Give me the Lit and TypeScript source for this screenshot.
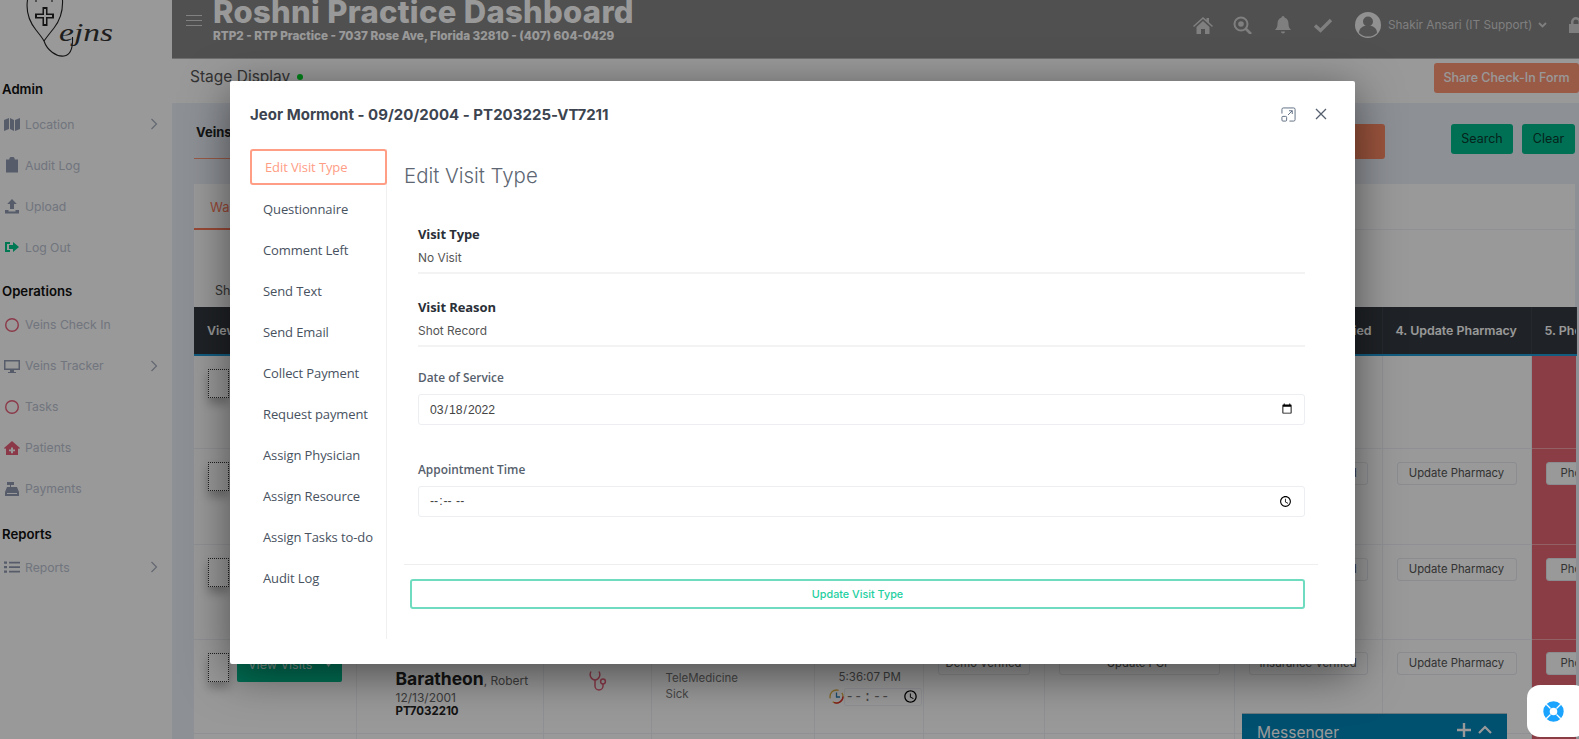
import { LitElement, html, css, svg } from "lit";
import { customElement } from "lit/decorators.js";

const ICONS: Record<string, unknown> = {
  map: svg`<path fill="currentColor" d="M0 4l5-2v11l-5 2zM6 2l4 2v11l-4-2zM11 4l5-2v11l-5 2z"/>`,
  clip: svg`<path fill="currentColor" d="M2 2.500h3.200a2.800 2.800 0 0 1 5.600 0H14v13H2z"/>`,
  upload: svg`<path fill="currentColor" d="M8 1l4.800 5H10v5H6V6H3.200zM1 12h3.500v1.500h7V12H15v3.500H1z"/>`,
  logout: svg`<path fill="currentColor" d="M1 3h5v2H3v6h3v2H1zM9 3l6 5-6 5v-3H5V6h4z"/>`,
  ring: svg`<circle cx="8" cy="8" r="6.300" fill="none" stroke="currentColor" stroke-width="1.400"/>`,
  desk: svg`<path fill="currentColor" fill-rule="evenodd" d="M0 2h16v10H10v2h2v1H4v-1h2v-2H0zM1.500 3.500v7h13v-7z"/>`,
  home: svg`<path fill="currentColor" fill-rule="evenodd" d="M8 1l8 7-1 1-1-.8V15H2V8.200L1 9 0 8zM7 7.500V9.500H5v1.800h2v2h2v-2h2V9.500H9v-2z"/>`,
  till: svg`<path fill="currentColor" d="M3 1h7v3H7v2h6l2 5v4H1v-4l2-5h3V4H3zM3 12v1h10v-1z"/>`,
  list: svg`<path fill="currentColor" d="M0 2.500h3v2.200H0zM5 2.800h11v1.600H5zM0 7h3v2.200H0zM5 7.300h11v1.600H5zM0 11.500h3v2.200H0zM5 11.800h11v1.600H5z"/>`,
};

type Item = { icon: string; label: string; tint?: string; more?: boolean };
const SECTIONS: { title: string; items: Item[] }[] = [
  { title: "Admin", items: [
    { icon: "map", label: "Location", more: true },
    { icon: "clip", label: "Audit Log" },
    { icon: "upload", label: "Upload" },
    { icon: "logout", label: "Log Out", tint: "green" },
  ]},
  { title: "Operations", items: [
    { icon: "ring", label: "Veins Check In", tint: "red" },
    { icon: "desk", label: "Veins Tracker", more: true },
    { icon: "ring", label: "Tasks", tint: "red" },
    { icon: "home", label: "Patients", tint: "red" },
    { icon: "till", label: "Payments" },
  ]},
  { title: "Reports", items: [{ icon: "list", label: "Reports", more: true }] },
];

const COLS = [162, 187, 108, 163, 109, 121, 190, 148, 149, 45];
const HEADS = ["View Visits", "Patient", "Physician", "Visit Type", "Time", "1. Demo Verified", "2. Update PCP", "3. Insurance Verified", "4. Update Pharmacy", "5. Phone"];
const ROWS = [93, 96, 95, 94, 60];
const TABS = ["Questionnaire", "Comment Left", "Send Text", "Send Email", "Collect Payment", "Request payment", "Assign Physician", "Assign Resource", "Assign Tasks to-do", "Audit Log"];

@customElement("app-root")
export class AppRoot extends LitElement {
  static styles = css`
    :host { display: block; position: relative; width: 1579px; height: 739px; overflow: hidden; background: #fff; font-family: Inter, "Liberation Sans", sans-serif; color: #333; }
    * { box-sizing: border-box; }
    .page { display: flex; height: 739px; }
    .side { width: 172px; flex: none; background: #fff; }
    .logo { height: 74px; display: block; }
    .sec { height: 29.500px; padding-left: 2px; font-size: 13.200px; font-weight: 600; line-height: 29.500px; color: #111; }
    .sec.s0 { padding-top: 1px; }
    .sec.s1 { margin-top: 10px; height: 26.500px; line-height: 26.500px; }
    .sec.s2 { margin-top: 14px; height: 23.500px; line-height: 23.500px; }
    .item { height: 41px; display: flex; align-items: center; padding: 0 14px 0 4px; font-size: 12.200px; color: #bcc3d2; gap: 5px; }
    .item svg { width: 16px; height: 16px; color: #8f9ab0; flex: none; }
    .item.red svg { color: #e8607a; }
    .item.green svg { color: #00c98c; }
    .item .lab { flex: 1; }
    .item .chev { width: 8px; height: 12px; color: #a5adbd; }
    .main { flex: 1; min-width: 0; background: #ebf1f8; display: flex; flex-direction: column; }
    .top { height: 59px; flex: none; background: #858585; display: flex; align-items: flex-start; color: #fff; border-bottom: 1px solid #b8b8b8; overflow: hidden; }
    .burger { width: 16px; margin: 15px 0 0 14px; flex: none; height: 11px; border-top: 1px solid #d8d8d8; border-bottom: 1px solid #d8d8d8; }
    .burger i { display: block; height: 1px; background: #d8d8d8; margin-top: 4px; }
    .brand { margin-left: 11px; flex: none; }
    .brand h1 { margin: -7px 0 0; font-size: 31px; line-height: 38px; font-weight: 800; letter-spacing: .3px; color: #fff; white-space: nowrap; }
    .brand p { margin: -2px 0 0; font-size: 11.700px; line-height: 14px; font-weight: 800; color: #fff; white-space: nowrap; }
    .tools { margin-left: auto; display: flex; align-items: center; height: 50px; color: #d4d4d4; }
    .tools svg { display: block; }
    .t1 { width: 20px; height: 18px; margin-right: 20px; }
    .t1.last { margin-right: 23px; }
    .avatar { width: 26px; height: 26px; margin-right: 7px; margin-left: -1px; }
    .who { font-size: 11.800px; color: #d4d4d4; white-space: nowrap; margin-right: 6px; width: 144px; }
    .car { width: 9px; height: 6px; margin-right: 22px; }
    .lock { width: 14px; height: 16px; margin-right: -4px; }
    .stage { height: 44px; flex: none; background: #fff; display: flex; align-items: flex-start; padding: 6px 0 0 18px; font-size: 15.500px; line-height: 24px; color: #555; }
    .dot { width: 6px; height: 6px; border-radius: 50%; background: #00d82a; margin: 9px 0 0 7px; }
    .share { margin: -2px 0 0 auto; height: 30px; width: 145px; background: #ff9676; border-radius: 3px; color: #fff; font-size: 12.500px; font-weight: 500; text-align: center; line-height: 30px; }
    .body { flex: 1; min-height: 0; padding: 0 4px 0 22px; overflow: hidden; }
    .head { height: 81px; display: flex; align-items: flex-start; padding-top: 21px; gap: 9px; }
    .head .cap { font-size: 13px; font-weight: 700; color: #222; padding: 0 2px 18px; border-bottom: 1px solid #ff9676; margin-right: auto; width: 180px; }
    .btn { height: 30px; font-size: 12.500px; line-height: 30px; text-align: center; color: #0b3a2f; background: #00bb8e; border-radius: 3px; }
    .btn.o { height: 35px; width: 190px; background: #ff8a65; margin-right: 57px; }
    .btn.s { width: 62px; }
    .btn.c { width: 53px; }
    .panel { background: #fff; height: 500px; }
    .tabbar { height: 46px; border-bottom: 1px solid #eef1f5; }
    .tab { display: block; width: 100px; height: 46px; padding: 15px 0 0 16px; font-size: 13px; color: #ff7a5a; border-bottom: 2px solid #ff7a5a; }
    .show { height: 77px; padding: 53px 0 0 21px; font-size: 12.500px; line-height: 16px; color: #555; }
    table { border-collapse: collapse; table-layout: fixed; width: 1382px; }
    th { height: 48px; background: #343a40; color: #fff; font-size: 12.400px; font-weight: 600; text-align: left; padding: 0 0 0 13px; border-bottom: 2px solid #1f9ad6; border-right: 1px solid #3e454c; white-space: nowrap; overflow: hidden; }
    td { vertical-align: top; padding: 0; border-right: 1px solid #eef1f5; border-bottom: 1px solid #eef1f5; font-size: 12px; color: #666; background: #fff; overflow: hidden; white-space: nowrap; }
    td.danger { background: #e66673; border-right: none; border-bottom-color: #f2a2aa; }
    .c0w { display: flex; gap: 8px; padding: 13px 0 0 14px; }
    .chk { width: 21px; height: 29px; border: 1px dotted #333; background: #fff; box-shadow: 0 6px 10px rgba(0,0,0,.25); flex: none; }
    .vv { width: 105px; height: 29px; background: #00bb8e; color: #d8f3ea; border-radius: 2px; font-size: 12.500px; line-height: 24px; padding-left: 11px; position: relative; }
    .vv svg { position: absolute; right: 9px; top: 8px; width: 9px; height: 6px; }
    .pill { display: block; margin: 13px 14px 0 14px; height: 23px; border: 1px solid #e6e9ef; background: #fff; border-radius: 3px; font-size: 11.300px; line-height: 21px; text-align: center; color: #555; white-space: nowrap; overflow: hidden; }
    td.danger .pill { width: 80px; margin-right: 0; text-align: left; padding-left: 14px; }
    .name { padding: 28px 0 0 39px; line-height: 14px; }
    .name b { font-size: 17.500px; line-height: 22px; font-weight: 700; color: #222; }
    .name span { font-size: 12px; color: #666; }
    .name div { height: 14px; line-height: 15px; }
    .name .pid { font-weight: 700; color: #222; font-size: 11.500px; }
    .steth { width: 18px; height: 22px; color: #e8607a; display: block; margin: 30px 0 0 45px; }
    .vt { padding: 30px 0 0 14px; line-height: 16px; font-size: 11.500px; color: #777; }
    .tm { padding: 30px 0 0 24px; line-height: 15px; font-size: 11.500px; }
    .tmr { display: flex; align-items: center; padding: 3px 0 0 14px; }
    .tmr svg { width: 15px; height: 15px; flex: none; }
    .tmr input { width: 78px; height: 18px; font-size: 14px; font-family: "Liberation Mono", monospace; padding: 0; border: 1px solid #eef1f5; border-radius: 2px; background: #fff; color: #777; }
    .mess { position: absolute; left: 1242px; top: 713px; width: 265px; height: 40px; background: #0085bb; color: #fff; font-size: 15.500px; padding: 9px 15px; display: flex; align-items: flex-start; border-top: 1px solid #b5c8d2; }
    .mess span { flex: 1; }
    .mess svg { width: 14px; height: 14px; margin-left: 7px; }
    .backdrop { position: absolute; inset: 0; background: rgba(0,0,0,.4); }
    .sup { position: absolute; left: 1527px; top: 685px; width: 60px; height: 52px; background: #fff; border-radius: 13px; display: flex; align-items: center; }
    .sup svg { width: 21px; height: 21px; display: block; margin-left: 16px; }
    .modal { position: absolute; left: 230px; top: 81px; width: 1125px; height: 583px; background: #fff; border-radius: 2px; box-shadow: 0 10px 45px rgba(0,0,0,.5); display: flex; flex-direction: column; padding-left: 20px; }
    .mhead { height: 68px; flex: none; display: flex; align-items: center; padding-bottom: 2px; }
    .mhead h2 { margin: 0; flex: 1; font-size: 15px; font-weight: 700; color: #3c4450; letter-spacing: .02px; }
    .mhead svg { display: block; }
    .mx1 { width: 15px; height: 15px; margin-right: 18px; color: #5b6a7e; }
    .mx2 { width: 14px; height: 14px; margin-right: 27px; color: #55606e; }
    .mbody { display: flex; flex: none; height: 490px; }
    .nav { width: 137px; flex: none; border-right: 1px solid #f0f0f0; font-family: "Open Sans", sans-serif; font-size: 13px; letter-spacing: -.1px; color: #48525f; }
    .nav .on { height: 36px; width: 137px; border: 2px solid #ff9d85; border-radius: 3px; color: #ff9d85; line-height: 32px; padding-left: 13px; margin-bottom: 4px; background: #fff; }
    .nav .it { height: 41px; line-height: 41px; padding-left: 13px; white-space: nowrap; }
    .cont { flex: 1; padding: 13px 37px 0 17px; min-width: 0; }
    .cont h3 { margin: 0; font-size: 20.400px; font-weight: 300; line-height: 28px; color: #5d6672; }
    .fields { padding: 0 13px 0 14px; }
    .lbl { font-family: "Open Sans", sans-serif; font-weight: 700; font-size: 13px; letter-spacing: -.1px; line-height: 18px; color: #2b3038; }
    .val { font-size: 11.900px; line-height: 16px; color: #555; padding: 7px 0 6px; border-bottom: 2px solid #f3f3f3; }
    .f1 { margin-top: 35px; }
    .f2 { margin-top: 24px; }
    .flab { font-family: "Open Sans", sans-serif; font-weight: 600; font-size: 11.900px; line-height: 18px; color: #56606c; }
    .fd { margin-top: 21px; }
    .ft { margin-top: 35px; }
    input.ctl { display: block; width: 100%; height: 31px; margin-top: 8px; border: 1px solid #eceef1; border-radius: 3px; padding: 0 9px 0 10px; font-family: "Liberation Sans", sans-serif; font-size: 12.200px; color: #444; background: #fff; }
    .foot { margin-top: 47px; border-top: 1px solid #eee; padding: 14px 13px 0 6px; }
    .upd { display: block; width: 100%; height: 30px; border: 2px solid #6fdcc0; border-radius: 3px; background: #fff; color: #1ecfa0; font-family: Inter, sans-serif; font-size: 10.800px; font-weight: 500; text-align: center; line-height: 26px; }
  `;

  private logo() {
    return html`<svg class="logo" width="172" height="74" viewBox="0 0 172 74" fill="none" stroke="#222" stroke-width="1.100">
      <path d="M27.500 0C26 10 28 20 36 30C40 35 43 39 44 41C47 50 56 57 64 56C71 55 73 48 72.500 37"/>
      <path d="M62.500 0C63 10 61 19 54 28C50 33 46 38 44 41"/>
      <path d="M36 0v2M52 0v2"/>
      <path fill="#222" stroke="none" d="M42.500 7h5v6.500H54v5h-6.500V26h-5v-7.500H35v-5h7.500z"/>
      <path fill="#fff" stroke="none" d="M44 9h2v6h6v2h-6v7h-2v-7h-7v-2h7z"/>
      <text x="59" y="41" font-family="Liberation Serif, serif" font-style="italic" font-size="25" textLength="54" lengthAdjust="spacingAndGlyphs" fill="#333" stroke="none">ejns</text>
    </svg>`;
  }

  private sidebar() {
    return html`<aside class="side">
      ${this.logo()}
      ${SECTIONS.map((s, i) => html`
        <div class="sec s${i}">${s.title}</div>
        ${s.items.map((it) => html`<div class="item ${it.tint ?? ""}">
          <svg viewBox="0 0 16 16">${ICONS[it.icon]}</svg>
          <span class="lab">${it.label}</span>
          ${it.more ? html`<svg class="chev" viewBox="0 0 8 12"><path d="M1.500 1l5 5-5 5" fill="none" stroke="currentColor" stroke-width="1.200"/></svg>` : ""}
        </div>`)}
      `)}
    </aside>`;
  }

  private topbar() {
    return html`<header class="top">
      <div class="burger"><i></i></div>
      <div class="brand">
        <h1>Roshni Practice Dashboard</h1>
        <p>RTP2 - RTP Practice - 7037 Rose Ave, Florida 32810 - (407) 604-0429</p>
      </div>
      <div class="tools">
        <svg class="t1" viewBox="0 0 20 18"><path fill="currentColor" d="M10 1l3.500 3V2h2.500v4.200L20 10l-1 1-9-8-9 8-1-1zM3.500 11L10 5l6.500 6v7H12v-5H8v5H3.500z"/></svg>
        <svg class="t1" viewBox="0 0 20 18"><circle cx="8" cy="8" r="6.500" fill="none" stroke="currentColor" stroke-width="2"/><circle cx="8" cy="8" r="2.800" fill="currentColor"/><path d="M12.500 12.500L18 18" stroke="currentColor" stroke-width="2.600"/></svg>
        <svg class="t1" viewBox="0 0 20 18"><path fill="currentColor" d="M10 0a1.500 1.500 0 0 1 1.500 1.500C14.500 2.300 15.500 5 15.500 8c0 3 1 4.500 2.500 6H2c1.500-1.500 2.500-3 2.500-6 0-3 1-5.700 4-6.500A1.500 1.500 0 0 1 10 0zM8 15.500h4a2 2 0 0 1-4 0z"/></svg>
        <svg class="t1 last" viewBox="0 0 20 18"><path d="M2 9.500l5.500 5L18 4" fill="none" stroke="currentColor" stroke-width="3.400"/></svg>
        <svg class="avatar" viewBox="0 0 26 26"><circle cx="13" cy="13" r="13" fill="#f2f2f2"/><circle cx="13" cy="9.500" r="5" fill="#8d8d8d"/><path fill="#8d8d8d" d="M4 21c0-5 4-7.500 9-7.500s9 2.500 9 7.500a13 13 0 0 1-18 0z"/></svg>
        <span class="who">Shakir Ansari (IT Support)</span>
        <svg class="car" viewBox="0 0 9 6"><path d="M1 1l3.500 3.500L8 1" fill="none" stroke="currentColor" stroke-width="1.800"/></svg>
        <svg class="lock" viewBox="0 0 14 16"><path fill="currentColor" d="M2 7V5a5 5 0 0 1 10 0v2h2v9H0V7zm2.500 0h5V5a2.500 2.500 0 0 0-5 0z"/></svg>
      </div>
    </header>`;
  }

  private rowCells(r: number) {
    const pills = ["Demo Verified", "Update PCP", "Insurance Verified", "Update Pharmacy", "Phone"];
    const showPills = r > 0 && r < 4;
    return html`
      <td><div class="c0w"><div class="chk"></div>${r === 3 ? html`<div class="vv">View Visits<svg viewBox="0 0 9 6"><path d="M0 0h9L4.500 6z" fill="#d8f3ea"/></svg></div>` : ""}</div></td>
      <td>${r === 3 ? html`<div class="name"><b>Baratheon</b><span>, Robert</span><div>12/13/2001</div><div class="pid">PT7032210</div></div>` : ""}</td>
      <td>${r === 3 ? html`<svg class="steth" viewBox="0 0 18 22" fill="none" stroke="currentColor" stroke-width="1.500"><path d="M2 1.500C0 5 2 10 6 10s6-5 4-8.500"/><path d="M6 10v6a4 4 0 0 0 8 0v-2"/><circle cx="14" cy="11.500" r="2.400"/></svg>` : ""}</td>
      <td>${r === 3 ? html`<div class="vt">TeleMedicine<br />Sick</div>` : ""}</td>
      <td>${r === 3 ? html`<div class="tm">5:36:07 PM</div><div class="tmr"><svg viewBox="0 0 15 15" fill="none" stroke-width="1.300"><circle cx="7.500" cy="7.500" r="6.500" stroke="#e0b040" stroke-dasharray="14 4"/><path d="M14 7.500A6.500 6.500 0 0 1 5 13.500" stroke="#e03030"/><path d="M7.500 3.500v4.500H11" stroke="#2d7fb5"/></svg><input type="time" /></div>` : ""}</td>
      ${pills.map((p, i) => html`<td class="${i === 4 ? "danger" : ""}">${showPills ? html`<span class="pill" style="margin-top:${r === 3 ? 12 : 13}px">${p}</span>` : ""}</td>`)}
    `;
  }

  private tablePart() {
    return html`<table>
      <colgroup>${COLS.map((w) => html`<col style="width:${w}px" />`)}</colgroup>
      <thead><tr>${HEADS.map((h) => html`<th>${h}</th>`)}</tr></thead>
      <tbody>${ROWS.map((h, r) => html`<tr style="height:${h}px">${this.rowCells(r)}</tr>`)}</tbody>
    </table>`;
  }

  private mainPart() {
    return html`<div class="main">
      ${this.topbar()}
      <div class="stage"><span>Stage Display</span><span class="dot"></span><div class="share">Share Check-In Form</div></div>
      <div class="body">
        <div class="head"><div class="cap">Veins Tracker</div><div class="btn o"></div><div class="btn s">Search</div><div class="btn c">Clear</div></div>
        <div class="panel">
          <div class="tabbar"><span class="tab">Waiting</span></div>
          <div class="show">Show</div>
          ${this.tablePart()}
        </div>
      </div>
    </div>`;
  }

  private modal() {
    return html`<section class="modal">
      <div class="mhead">
        <h2>Jeor Mormont - 09/20/2004 - PT203225-VT7211</h2>
        <svg class="mx1" viewBox="0 0 16 16" fill="none" stroke="currentColor" stroke-width="1"><path d="M1 7V2.500A1.500 1.500 0 0 1 2.500 1h11A1.500 1.500 0 0 1 15 2.500v11a1.500 1.500 0 0 1-1.500 1.500H9"/><rect x="1" y="10" width="5" height="5" rx="1"/><path d="M7.500 8.500L12 4M8.500 4H12v3.500"/></svg>
        <svg class="mx2" viewBox="0 0 14 14" fill="none" stroke="currentColor" stroke-width="1.300"><path d="M2 2l10 10M12 2L2 12"/></svg>
      </div>
      <div class="mbody">
        <nav class="nav">
          <div class="on">Edit Visit Type</div>
          ${TABS.map((t) => html`<div class="it">${t}</div>`)}
        </nav>
        <div class="cont">
          <h3>Edit Visit Type</h3>
          <div class="fields">
            <div class="f1"><div class="lbl">Visit Type</div><div class="val">No Visit</div></div>
            <div class="f2"><div class="lbl">Visit Reason</div><div class="val">Shot Record</div></div>
            <div class="fd"><div class="flab">Date of Service</div><input class="ctl" type="date" value="2022-03-18" /></div>
            <div class="ft"><div class="flab">Appointment Time</div><input class="ctl" type="time" /></div>
          </div>
          <div class="foot"><button class="upd">Update Visit Type</button></div>
        </div>
      </div>
    </section>`;
  }

  render() {
    return html`
      <div class="page">${this.sidebar()}${this.mainPart()}</div>
      <div class="mess"><span>Messenger</span>
        <svg viewBox="0 0 14 14"><path d="M7 0v14M0 7h14" stroke="#fff" stroke-width="2.400"/></svg>
        <svg viewBox="0 0 14 14"><path d="M1 10l6-6 6 6" fill="none" stroke="#fff" stroke-width="2.200"/></svg>
      </div>
      <div class="backdrop"></div>
      ${this.modal()}
      <div class="sup"><svg viewBox="0 0 21 21" fill="none"><circle cx="10.500" cy="10.500" r="7" stroke="#1aa3ff" stroke-width="6.400"/><path d="M3.200 3.200L7.500 7.500M17.800 3.200L13.500 7.500M3.200 17.800L7.500 13.500M17.800 17.800L13.500 13.500" stroke="#fff" stroke-width="1.300"/></svg></div>
    `;
  }
}
